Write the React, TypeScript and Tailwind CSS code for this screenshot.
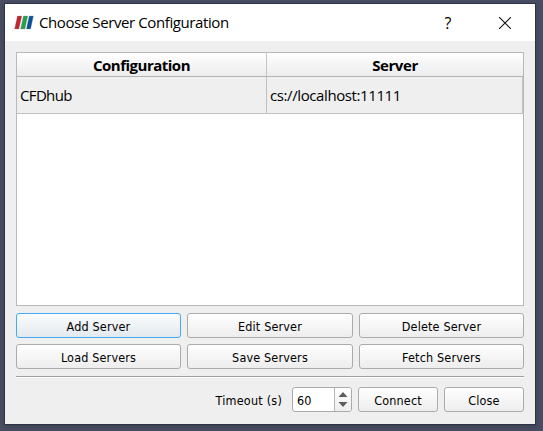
import React from "react";

const buttonBase =
  "flex h-[25px] items-center justify-center rounded-[3px] border pt-[3px] text-[12.5px] leading-none tracking-[0.16px] text-black";

function PushButton({ label, focused = false, className = "" }: { label: string; focused?: boolean; className?: string }) {
  const tone = focused
    ? "border-[#45a9f5] bg-linear-to-b from-[#fbfcfd] to-[#e2e9ee]"
    : "border-[#ababab] bg-linear-to-b from-white to-[#ededed]";
  return (
    <button type="button" className={`${buttonBase} ${tone} ${className}`}>
      {label}
    </button>
  );
}

function AppLogo() {
  return (
    <svg width="20" height="15" viewBox="0 0 20 15" className="block">
      <path d="M3.4 1H7.8L4.9 14H0.6Z" fill="#c02430" stroke="#888" strokeOpacity=".45" strokeWidth=".6" />
      <path d="M9.4 1H13.8L10.9 14H6.6Z" fill="#25a04a" stroke="#888" strokeOpacity=".45" strokeWidth=".6" />
      <path d="M15.2 1H19.4L16.6 14H12.4Z" fill="#0a5296" stroke="#888" strokeOpacity=".45" strokeWidth=".6" />
    </svg>
  );
}

function TitleBar() {
  return (
    <header className="flex h-[37px] items-center bg-white pl-[9px] font-['Open_Sans','Noto_Sans',sans-serif]">
      <AppLogo />
      <h1 className="ml-[5px] pb-px text-[15px] leading-none font-normal tracking-[-0.4px] text-black">
        Choose Server Configuration
      </h1>
      <span className="ml-auto w-[10px] text-center text-[16px] leading-none">?</span>
      <svg width="12" height="12" viewBox="0 0 12 12" className="mr-[24px] ml-[46px] block">
        <path d="M0 0L12 12M12 0L0 12" stroke="#111" strokeWidth="1.1" />
      </svg>
    </header>
  );
}

function ServerTable() {
  return (
    <section className="h-[254px] border border-[#b9b9b9] bg-white font-['Open_Sans','Noto_Sans',sans-serif] text-[15px] leading-none tracking-[-0.4px] text-black">
      <div className="flex h-[24px] border-b border-[#b3b3b3] bg-linear-to-b from-white to-[#ececec] font-bold">
        <div className="flex w-[250px] items-center justify-center border-r border-[#c6c6c6] pt-px tracking-[-0.5px]">Configuration</div>
        <div className="flex flex-1 items-center justify-center pt-px">Server</div>
      </div>
      <div className="flex h-[37px] border-b border-[#c0c0c0] bg-[#efefef]">
        <div className="flex w-[250px] items-center border-r border-[#c0c0c0] pl-[3px] tracking-[-0.65px]">CFDhub</div>
        <div className="flex flex-1 items-center border-r border-[#c0c0c0] pl-[3px]">cs://localhost:11111</div>
      </div>
    </section>
  );
}

function TimeoutField() {
  return (
    <div className="flex h-[25px] w-[60px] overflow-hidden rounded-[3px] border border-[#ababab] bg-white">
      <div className="flex flex-1 items-center pt-[3px] pl-1 text-[12.5px] leading-none">60</div>
      <div className="flex w-[17px] items-center justify-center border-l border-[#b5b5b5] bg-linear-to-b from-white to-[#ededed]">
        <svg width="10" height="15" viewBox="0 0 10 15">
          <path d="M5 0L9.5 5H0.5ZM0.5 10H9.5L5 15Z" fill="#5c5c5c" />
        </svg>
      </div>
    </div>
  );
}

export default function App() {
  return (
    <main className="h-[431px] w-[543px] overflow-hidden bg-[#4a4e65] pt-[3px] pl-[4px]">
      <div className="h-[422px] w-[532px] border border-[#2f3241] bg-[#efefef] font-['DejaVu_Sans_Condensed','DejaVu_Sans',sans-serif] shadow-[0_2px_7px_rgba(0,0,0,0.2)]">
        <TitleBar />
        <div className="px-[11px] pt-[11px]">
          <ServerTable />
          <div className="mt-[7px] grid grid-cols-[165px_166px_165px] gap-[6px]">
            <PushButton label="Add Server" focused />
            <PushButton label="Edit Server" />
            <PushButton label="Delete Server" />
            <PushButton label="Load Servers" />
            <PushButton label="Save Servers" />
            <PushButton label="Fetch Servers" />
          </div>
          <div className="mt-[7px] h-[2px] border-t border-b border-t-[#a0a0a0] border-b-white" />
          <footer className="mt-[9px] flex items-center justify-end">
            <span className="mr-[10px] pt-[3px] text-[12.5px] leading-none tracking-[0.22px]">Timeout (s)</span>
            <TimeoutField />
            <PushButton label="Connect" className="ml-[6px] w-[80px]" />
            <PushButton label="Close" className="ml-[6px] w-[80px]" />
          </footer>
        </div>
      </div>
    </main>
  );
}
